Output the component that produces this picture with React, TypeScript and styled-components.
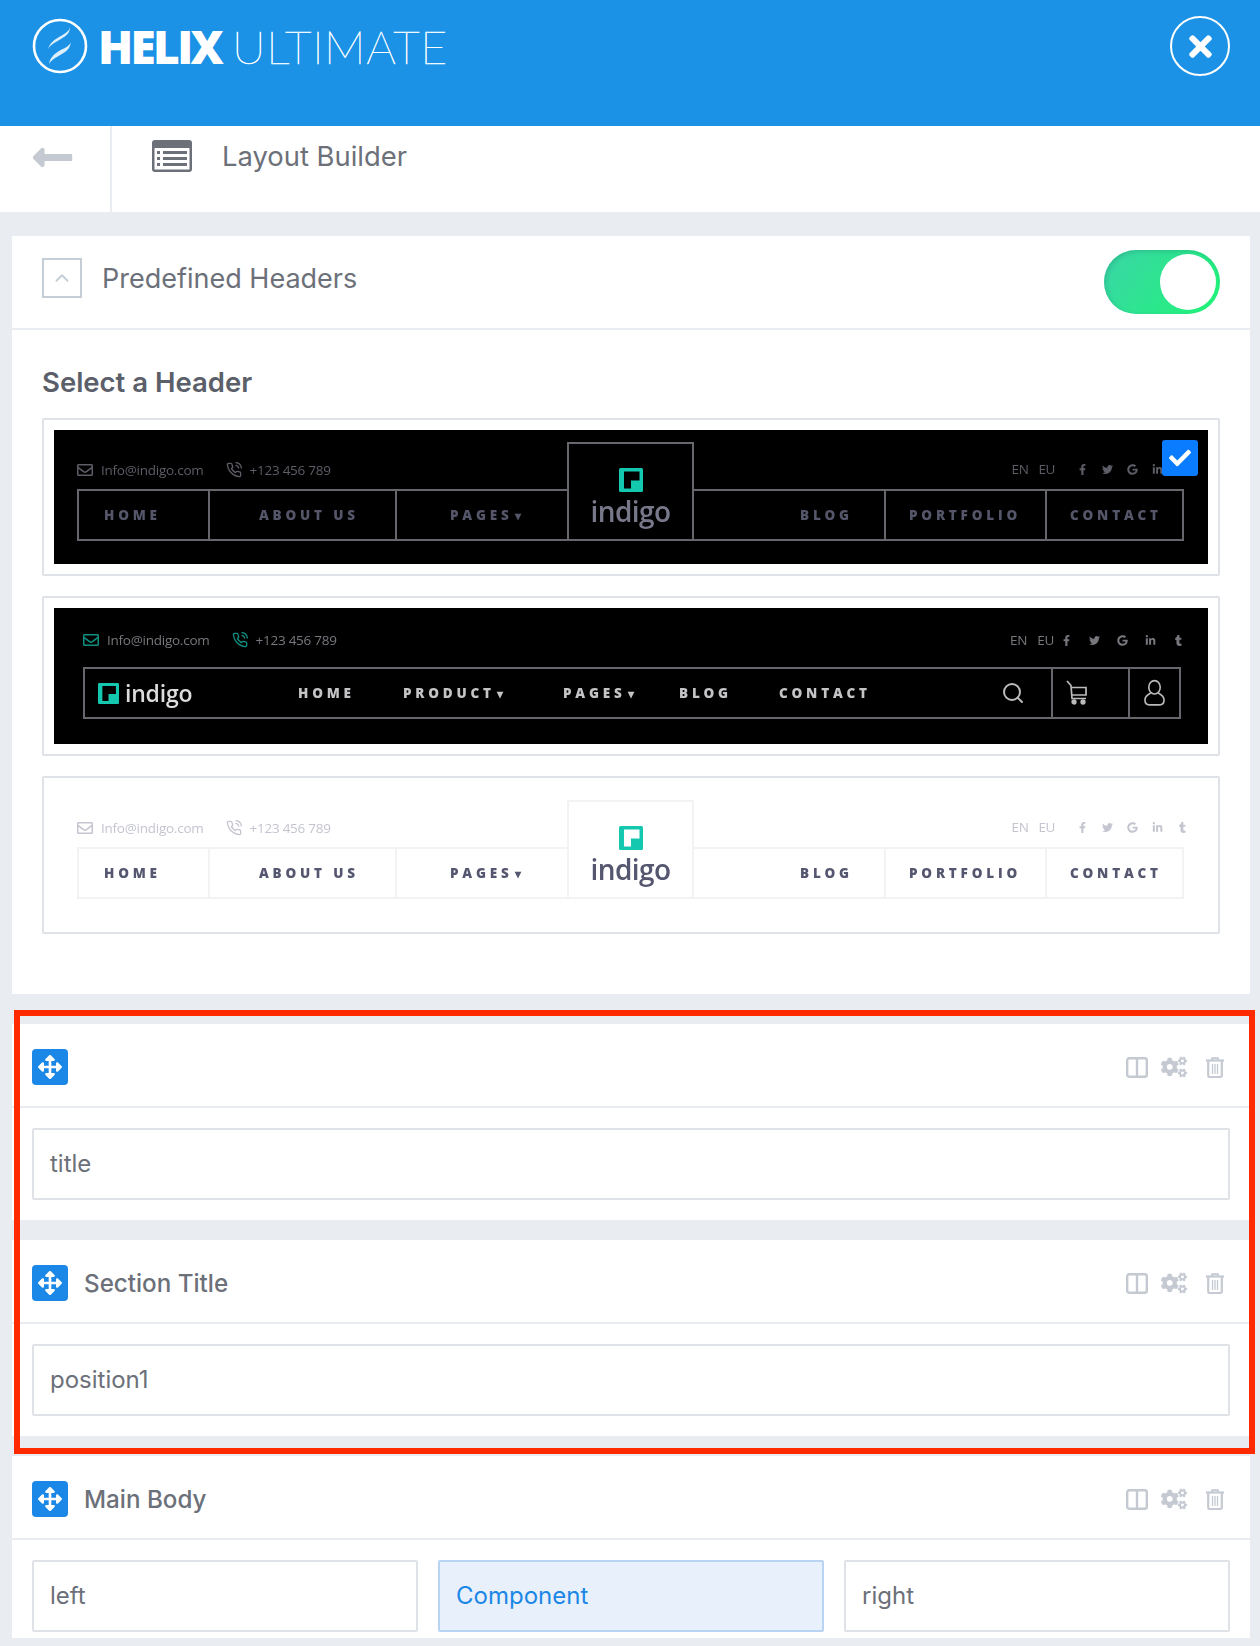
import React from 'react'
import styled, { createGlobalStyle } from 'styled-components'
import {
  FaArrowsAlt,
  FaCheck,
  FaCogs,
  FaFacebookF,
  FaGoogle,
  FaLinkedinIn,
  FaLongArrowAltLeft,
  FaRegEnvelope,
  FaTimes,
  FaTumblr,
  FaTwitter,
} from 'react-icons/fa'
import { FiChevronUp, FiPhoneCall, FiSearch } from 'react-icons/fi'

const GlobalStyle = createGlobalStyle`
  html, body {
    margin: 0;
    padding: 0;
    background: #e9edf1;
  }
  body {
    font-family: Inter, "Liberation Sans", sans-serif;
    color: #6c7079;
  }
  * {
    box-sizing: border-box;
  }
`

const Page = styled.div`
  position: relative;
  width: 1260px;
  height: 1646px;
  overflow: hidden;
  background: #e9edf1;
`

const TopBar = styled.header`
  display: flex;
  justify-content: space-between;
  align-items: flex-start;
  height: 126px;
  padding: 16px 30px 0 32px;
  background: #1b92e6;
  color: #fff;
`

const Brand = styled.div`
  display: flex;
  align-items: center;
  height: 60px;
`

const BrandStrong = styled.span`
  margin-left: 10px;
  font-family: 'Open Sans', sans-serif;
  font-size: 46px;
  font-weight: 800;
  letter-spacing: -2.7px;
  line-height: 60px;
`

const BrandLight = styled.span`
  margin-left: 11px;
  font-family: Lato, sans-serif;
  font-size: 46.5px;
  font-weight: 100;
  letter-spacing: 0.6px;
  line-height: 60px;
  -webkit-text-stroke: 0.6px #fff;
`

const CloseButton = styled.div`
  display: flex;
  align-items: center;
  justify-content: center;
  width: 60px;
  height: 60px;
  border: 2px solid #fff;
  border-radius: 50%;
  font-size: 33px;
`

const SubBar = styled.div`
  display: flex;
  height: 86px;
  background: #fff;
`

const BackCell = styled.div`
  width: 112px;
  padding: 9px 0 0 30px;
  border-right: 2px solid #e9edf1;
  color: #c5cad2;
  font-size: 45px;
  line-height: 0;
`

const PageTitle = styled.div`
  display: flex;
  align-items: center;
  gap: 30px;
  height: 60px;
  padding-left: 40px;
  font-size: 27.4px;
  color: #6c7079;
`

const Panel = styled.section`
  margin: 24px 10px 30px 12px;
  height: 758px;
  background: #fff;
`

const PanelHead = styled.div`
  display: flex;
  align-items: center;
  justify-content: space-between;
  height: 94px;
  padding: 0 30px;
  border-bottom: 2px solid #e9edf1;
`

const PanelHeadLeft = styled.div`
  display: flex;
  align-items: center;
  gap: 20px;
  padding-bottom: 8px;
  font-size: 27px;
  color: #6c7079;
`

const CollapseBox = styled.div`
  display: flex;
  align-items: center;
  justify-content: center;
  width: 40px;
  height: 40px;
  border: 2px solid #c5ced6;
  color: #c5ced6;
  font-size: 22px;
`

const Toggle = styled.div`
  display: flex;
  justify-content: flex-end;
  align-items: center;
  width: 116px;
  height: 64px;
  padding-right: 4px;
  border-radius: 32px;
  background: linear-gradient(125deg, #3bd5a8, #1ff576);
  box-shadow: inset 2px 2px 4px rgba(20, 120, 100, 0.25);
`

const ToggleKnob = styled.div`
  width: 56px;
  height: 56px;
  border-radius: 50%;
  background: #fff;
`

const PanelBody = styled.div`
  padding: 35px 30px 0;
`

const SelectTitle = styled.h3`
  margin: 0 0 19px;
  font-size: 27.5px;
  font-weight: 600;
  line-height: 34px;
  color: #5b5f69;
`

const PreviewList = styled.div`
  display: flex;
  flex-direction: column;
  gap: 20px;
`

const PreviewCard = styled.div`
  padding: 10px;
  border: 2px solid #dfe3e8;
  border-radius: 2px;
  background: #fff;
`

const Thumb = styled.div<{ $light?: boolean }>`
  position: relative;
  height: ${({ $light }) => ($light ? '134px' : 'auto')};
  background: ${({ $light }) => ($light ? '#fff' : '#000')};
  font-family: 'Open Sans', sans-serif;
`

const BlurLayer = styled.div`
  filter: blur(0.7px);
`

const CenterGrid = styled.div`
  display: grid;
  grid-template-columns: 131px 187px 172px 127px 190px 161px 139px;
  grid-template-rows: 47px 52px;
  height: 134px;
  padding: 12px 0 0 23px;
`

const InfoLeft = styled.div<{ $color: string; $iconColor?: string }>`
  display: flex;
  align-items: center;
  align-self: start;
  height: 22px;
  margin-top: 17px;
  font-size: 13.5px;
  letter-spacing: -0.25px;
  color: ${({ $color }) => $color};
  grid-column: 1 / 4;
  svg {
    color: ${({ $iconColor, $color }) => $iconColor || $color};
    font-size: 16px;
  }
`

const InfoText = styled.span<{ $gap: number }>`
  margin: 0 ${({ $gap }) => $gap}px 0 8px;
  white-space: nowrap;
`

const InfoRight = styled.div<{ $color: string }>`
  display: flex;
  align-items: center;
  align-self: start;
  justify-content: flex-end;
  gap: 10px;
  height: 22px;
  margin: 16px -4px 0 0;
  font-size: 13.5px;
  letter-spacing: -0.4px;
  color: ${({ $color }) => $color};
  grid-column: 5 / 8;
  svg {
    font-size: 11px;
  }
`

const SocialGroup = styled.div<{ $gap: number; $left: number }>`
  display: flex;
  align-items: center;
  gap: ${({ $gap }) => $gap}px;
  margin-left: ${({ $left }) => $left}px;
`

const NavCell = styled.div<{
  $pad: number
  $color: string
  $line: string
  $last?: boolean
  $joined?: boolean
}>`
  display: flex;
  align-items: center;
  padding-left: ${({ $pad }) => $pad}px;
  border: 2px solid ${({ $line }) => $line};
  border-left-width: ${({ $joined }) => ($joined ? '0' : '2px')};
  border-right-width: ${({ $last }) => ($last ? '2px' : '0')};
  color: ${({ $color }) => $color};
  font-size: 13.5px;
  font-weight: 800;
  letter-spacing: 3.8px;
  white-space: nowrap;
  grid-row: 2;
`

const LogoCell = styled.div<{ $line: string; $color: string }>`
  display: flex;
  flex-direction: column;
  align-items: center;
  padding-top: 24px;
  border: 2px solid ${({ $line }) => $line};
  color: ${({ $color }) => $color};
  font-size: 28px;
  font-weight: 600;
  letter-spacing: -0.6px;
  line-height: 30px;
  grid-column: 4;
  grid-row: 1 / 3;
`

const LogoWord = styled.span`
  margin-top: 4px;
`

const Caret = styled.span`
  margin-left: 2px;
  font-size: 12px;
  letter-spacing: 0;
`

const InlineWrap = styled.div`
  height: 136px;
  padding: 21px 27px 0 29px;
`

const InlineTop = styled.div`
  display: flex;
  justify-content: space-between;
  align-items: center;
  height: 22px;
  margin-bottom: 16px;
  color: #77787e;
  font-size: 13.5px;
  letter-spacing: -0.25px;
`

const InlineLeft = styled.div`
  display: flex;
  align-items: center;
  svg {
    color: #0f8f80;
    font-size: 16px;
  }
`

const InlineRight = styled.div`
  display: flex;
  align-items: center;
  gap: 10px;
  margin-right: -3px;
  svg {
    font-size: 11px;
  }
`

const InlineNav = styled.div`
  display: flex;
  align-items: center;
  height: 52px;
  border: 2px solid #66676c;
`

const InlineBrand = styled.div`
  display: flex;
  align-items: center;
  gap: 6px;
  width: 213px;
  padding-left: 13px;
  color: #ddd;
  font-size: 23px;
  font-weight: 600;
  letter-spacing: -0.2px;
`

const InlineLink = styled.div<{ $width: number }>`
  width: ${({ $width }) => $width}px;
  color: #c4c4c6;
  font-size: 13.5px;
  font-weight: 800;
  letter-spacing: 3.8px;
  white-space: nowrap;
`

const SearchSlot = styled.div`
  display: flex;
  flex: 1;
  justify-content: flex-end;
  padding-right: 26px;
  color: #bbb;
  font-size: 24px;
`

const IconSlot = styled.div<{ $width: number; $pad: number }>`
  display: flex;
  align-items: center;
  width: ${({ $width }) => $width}px;
  height: 100%;
  padding-left: ${({ $pad }) => $pad}px;
  border-left: 2px solid #66676c;
  color: #bbb;
`

const CheckBadge = styled.div`
  position: absolute;
  top: 10px;
  right: 10px;
  display: flex;
  align-items: center;
  justify-content: center;
  width: 36px;
  height: 36px;
  border-radius: 3px;
  background: #0a7cff;
  color: #fff;
  font-size: 22px;
`

const SectionRow = styled.section<{ $tail?: number }>`
  margin: 0 10px 20px 12px;
  background: #fff;
  padding-bottom: ${({ $tail }) => $tail ?? 20}px;
`

const SectionHead = styled.div`
  display: flex;
  align-items: center;
  height: 84px;
  padding: 4px 26px 0 20px;
  border-bottom: 2px solid #e9edf1;
`

const MoveHandle = styled.div`
  display: flex;
  align-items: center;
  justify-content: center;
  width: 36px;
  height: 36px;
  border-radius: 4px;
  background: #1b87e6;
  color: #fff;
  font-size: 24px;
`

const SectionName = styled.div`
  flex: 1;
  margin-left: 16px;
  font-size: 24.2px;
  font-weight: 500;
  color: #6c7079;
`

const SectionTools = styled.div`
  display: flex;
  align-items: center;
  gap: 13px;
  color: #c5cad2;
`

const ToolGears = styled.span`
  display: flex;
  font-size: 26px;
`

const ToolTrash = styled.span`
  display: flex;
  margin-left: 6px;
`

const ColumnGrid = styled.div<{ $cols: number }>`
  display: grid;
  grid-template-columns: repeat(${({ $cols }) => $cols}, 1fr);
  gap: 20px;
  padding: 20px 20px 0;
`

const ColumnBox = styled.div<{ $active?: boolean }>`
  height: 72px;
  padding-left: 16px;
  border: 2px solid ${({ $active }) => ($active ? '#b9d3f3' : '#dfe3e8')};
  border-radius: 2px;
  background: ${({ $active }) => ($active ? '#e8f0fb' : '#fff')};
  color: ${({ $active }) => ($active ? '#1b87e6' : '#6c7079')};
  font-size: 24px;
  line-height: 68px;
`

const RedFrame = styled.div`
  position: absolute;
  top: 1010px;
  left: 14px;
  width: 1241px;
  height: 444px;
  border: 6px solid #ff2a00;
`

const HelixMark = () => (
  <svg width="56" height="56" viewBox="0 0 56 56" fill="none">
    <circle cx="28" cy="28" r="26" stroke="#fff" strokeWidth="2.6" />
    <path d="M16 31c2-6 6-9 11-12 5-3 10-5 11-10 0 6-4 9-9 12-5 3-10 5-13 10z" fill="#fff" fillOpacity="0.85" />
    <path d="M17 46c1-6 5-10 10-13 5-3 10-4 12-9-1 6-4 9-9 12-5 3-10 5-13 10z" fill="#fff" fillOpacity="0.85" />
  </svg>
)

const LayoutIcon = () => (
  <svg width="40" height="32" viewBox="0 0 40 32">
    <rect width="40" height="32" rx="3" fill="#6c7079" />
    <rect x="2.5" y="8" width="35" height="21.5" fill="#fff" />
    <g fill="#6c7079">
      <rect x="5" y="11" width="3" height="3" />
      <rect x="5" y="17" width="3" height="3" />
      <rect x="5" y="23" width="3" height="3" />
      <rect x="11" y="11" width="24" height="3" />
      <rect x="11" y="17" width="24" height="3" />
      <rect x="11" y="23" width="24" height="3" />
    </g>
  </svg>
)

const IndigoMark = ({ size, cut }: { size: number; cut: string }) => (
  <svg width={size} height={size} viewBox="0 0 24 24">
    <rect width="24" height="24" rx="1.5" fill="#14c8b0" />
    <path d="M5 3.5H20.5V12.5H12V20.5H5Z" fill={cut} />
  </svg>
)

const SplitIcon = () => (
  <svg width="22" height="21" viewBox="0 0 22 21" fill="none" stroke="currentColor" strokeWidth="2.4">
    <rect x="1.2" y="1.2" width="19.6" height="18.6" rx="2" />
    <path d="M11 1V20" />
  </svg>
)

const TrashIcon = () => (
  <svg width="18" height="21" viewBox="0 0 18 21" fill="none" stroke="currentColor">
    <path d="M0 3.5H18" strokeWidth="2.2" />
    <path d="M6 3V1.2H12V3" strokeWidth="1.8" />
    <path d="M2.2 4V18.5a1.5 1.5 0 0 0 1.5 1.5H14.3a1.5 1.5 0 0 0 1.5-1.5V4" strokeWidth="2.2" />
    <path d="M6.5 7V17M9 7V17M11.5 7V17" strokeWidth="1.3" />
  </svg>
)

const CartIcon = () => (
  <svg width="22" height="26" viewBox="0 0 22 26" fill="none" stroke="currentColor" strokeWidth="1.7">
    <path d="M1 1L5 5.5 6 18.5H20" />
    <path d="M5.2 7.5H20V15H6" />
    <circle cx="8" cy="22" r="1.8" fill="currentColor" />
    <circle cx="17" cy="22" r="1.8" fill="currentColor" />
  </svg>
)

const UserIcon = () => (
  <svg width="21" height="28" viewBox="0 0 22 28" fill="none" stroke="currentColor" strokeWidth="1.7">
    <ellipse cx="11" cy="8" rx="6" ry="7" />
    <path d="M7 14C3 16 1 18 1 21.5 1 25 4 26.5 7 26.5H15C18 26.5 21 25 21 21.5 21 18 19 16 15 14" />
  </svg>
)

const Socials = () => (
  <>
    <FaFacebookF />
    <FaTwitter />
    <FaGoogle />
    <FaLinkedinIn />
    <FaTumblr />
  </>
)

interface CenterHeaderProps {
  info: string
  line: string
  nav: string
  logo: string
  cut: string
}

const CenterHeader = ({ info, line, nav, logo, cut }: CenterHeaderProps) => (
  <CenterGrid>
    <InfoLeft $color={info}>
      <FaRegEnvelope />
      <InfoText $gap={22}>Info@indigo.com</InfoText>
      <FiPhoneCall />
      <InfoText $gap={0}>+123 456 789</InfoText>
    </InfoLeft>
    <InfoRight $color={info}>
      <span>EN</span>
      <span>EU</span>
      <SocialGroup $gap={14} $left={12}>
        <Socials />
      </SocialGroup>
    </InfoRight>
    <NavCell $pad={25} $color={nav} $line={line}>HOME</NavCell>
    <NavCell $pad={49} $color={nav} $line={line}>ABOUT US</NavCell>
    <NavCell $pad={53} $color={nav} $line={line}>PAGES<Caret>▾</Caret></NavCell>
    <LogoCell $line={line} $color={logo}>
      <IndigoMark size={24} cut={cut} />
      <LogoWord>indigo</LogoWord>
    </LogoCell>
    <NavCell $pad={106} $color={nav} $line={line} $joined>BLOG</NavCell>
    <NavCell $pad={23} $color={nav} $line={line}>PORTFOLIO</NavCell>
    <NavCell $pad={23} $color={nav} $line={line} $last>CONTACT</NavCell>
  </CenterGrid>
)

const InlineHeader = () => (
  <InlineWrap>
    <InlineTop>
      <InlineLeft>
        <FaRegEnvelope />
        <InfoText $gap={22}>Info@indigo.com</InfoText>
        <FiPhoneCall />
        <InfoText $gap={0}>+123 456 789</InfoText>
      </InlineLeft>
      <InlineRight>
        <span>EN</span>
        <span>EU</span>
        <SocialGroup $gap={17} $left={-3}>
          <Socials />
        </SocialGroup>
      </InlineRight>
    </InlineTop>
    <InlineNav>
      <InlineBrand>
        <IndigoMark size={21} cut="#000" />
        indigo
      </InlineBrand>
      <InlineLink $width={105}>HOME</InlineLink>
      <InlineLink $width={160}>PRODUCT<Caret>▾</Caret></InlineLink>
      <InlineLink $width={116}>PAGES<Caret>▾</Caret></InlineLink>
      <InlineLink $width={100}>BLOG</InlineLink>
      <InlineLink $width={90}>CONTACT</InlineLink>
      <SearchSlot><FiSearch /></SearchSlot>
      <IconSlot $width={77} $pad={13}><CartIcon /></IconSlot>
      <IconSlot $width={51} $pad={14}><UserIcon /></IconSlot>
    </InlineNav>
  </InlineWrap>
)

const Section = ({
  name,
  columns,
  tail,
}: {
  name?: string
  columns: { label: string; active?: boolean }[]
  tail?: number
}) => (
  <SectionRow $tail={tail}>
    <SectionHead>
      <MoveHandle><FaArrowsAlt /></MoveHandle>
      <SectionName>{name}</SectionName>
      <SectionTools>
        <SplitIcon />
        <ToolGears><FaCogs /></ToolGears>
        <ToolTrash><TrashIcon /></ToolTrash>
      </SectionTools>
    </SectionHead>
    <ColumnGrid $cols={columns.length}>
      {columns.map((c) => (
        <ColumnBox key={c.label} $active={c.active}>{c.label}</ColumnBox>
      ))}
    </ColumnGrid>
  </SectionRow>
)

export default function App() {
  return (
    <Page>
      <GlobalStyle />
      <TopBar>
        <Brand>
          <HelixMark />
          <BrandStrong>HELIX</BrandStrong>
          <BrandLight>ULTIMATE</BrandLight>
        </Brand>
        <CloseButton><FaTimes /></CloseButton>
      </TopBar>
      <SubBar>
        <BackCell><FaLongArrowAltLeft /></BackCell>
        <PageTitle>
          <LayoutIcon />
          Layout Builder
        </PageTitle>
      </SubBar>
      <Panel>
        <PanelHead>
          <PanelHeadLeft>
            <CollapseBox><FiChevronUp /></CollapseBox>
            Predefined Headers
          </PanelHeadLeft>
          <Toggle><ToggleKnob /></Toggle>
        </PanelHead>
        <PanelBody>
          <SelectTitle>Select a Header</SelectTitle>
          <PreviewList>
            <PreviewCard>
              <Thumb>
                <BlurLayer>
                  <CenterHeader info="#5c5d66" line="#66676c" nav="#55566a" logo="#77788a" cut="#000" />
                </BlurLayer>
                <CheckBadge><FaCheck /></CheckBadge>
              </Thumb>
            </PreviewCard>
            <PreviewCard>
              <Thumb>
                <BlurLayer>
                  <InlineHeader />
                </BlurLayer>
              </Thumb>
            </PreviewCard>
            <PreviewCard>
              <Thumb $light>
                <BlurLayer>
                  <CenterHeader info="#c4c5d0" line="#f2f3f5" nav="#55566f" logo="#55566f" cut="#fff" />
                </BlurLayer>
              </Thumb>
            </PreviewCard>
          </PreviewList>
        </PanelBody>
      </Panel>
      <Section columns={[{ label: 'title' }]} />
      <Section name="Section Title" columns={[{ label: 'position1' }]} />
      <Section
        name="Main Body"
        tail={6}
        columns={[{ label: 'left' }, { label: 'Component', active: true }, { label: 'right' }]}
      />
      <RedFrame />
    </Page>
  )
}
